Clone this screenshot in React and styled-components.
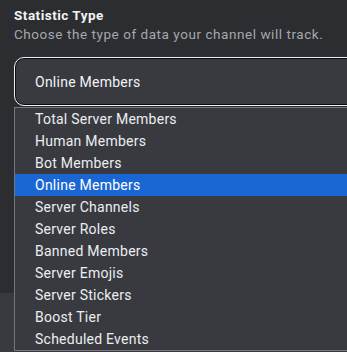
import styled, { createGlobalStyle } from 'styled-components';

const GlobalStyle = createGlobalStyle`
  html, body {
    margin: 0;
    padding: 0;
    background: #383a40;
    font-family: Roboto, "Liberation Sans", sans-serif;
    overflow: hidden;
  }
`;

const Page = styled.div`
  width: 347px;
  height: 352px;
  position: relative;
  overflow: hidden;
`;

const Panel = styled.div`
  background: #2b2d31;
  height: 293px;
  padding: 6px 0 0 14px;
  box-sizing: border-box;
`;

const Label = styled.div`
  color: #f2f3f5;
  font-size: 13.5px;
  font-weight: 700;
  line-height: 18px;
  letter-spacing: 0.5px;
`;

const Hint = styled.div`
  color: #a4a8ae;
  font-size: 13.5px;
  line-height: 18px;
  margin-top: 1px;
  letter-spacing: 0.55px;
`;

const SelectBox = styled.div`
  margin-top: 14px;
  width: 360px;
  height: 49px;
  box-sizing: border-box;
  background: #383a40;
  border: 1px solid #f0f0f2;
  box-shadow: inset 0 0 0 1px #0c0d0f;
  border-radius: 10px;
  display: flex;
  align-items: center;
  padding-left: 20px;
  color: #f2f3f5;
  font-size: 14px;
  letter-spacing: 0.25px;
`;

const ListBox = styled.ul`
  position: absolute;
  left: 14px;
  top: 107px;
  width: 360px;
  margin: 0;
  padding: 0;
  list-style: none;
  background: #383a40;
  border: 1px solid #74767c;
  border-right: none;
`;

const Option = styled.li`
  height: 22px;
  line-height: 22px;
  padding-left: 20px;
  font-size: 14px;
  letter-spacing: 0.25px;
  color: ${({ $active }) => ($active ? '#ffffff' : '#eceef1')};
  background: ${({ $active }) => ($active ? '#1a66d2' : 'transparent')};
`;

const options = [
  'Total Server Members',
  'Human Members',
  'Bot Members',
  'Online Members',
  'Server Channels',
  'Server Roles',
  'Banned Members',
  'Server Emojis',
  'Server Stickers',
  'Boost Tier',
  'Scheduled Events',
];

export default function App() {
  const selected = 'Online Members';
  return (
    <Page>
      <GlobalStyle />
      <Panel>
        <Label>Statistic Type</Label>
        <Hint>Choose the type of data your channel will track.</Hint>
        <SelectBox>{selected}</SelectBox>
      </Panel>
      <ListBox role="listbox">
        {options.map((o) => (
          <Option key={o} $active={o === selected}>
            {o}
          </Option>
        ))}
      </ListBox>
    </Page>
  );
}
